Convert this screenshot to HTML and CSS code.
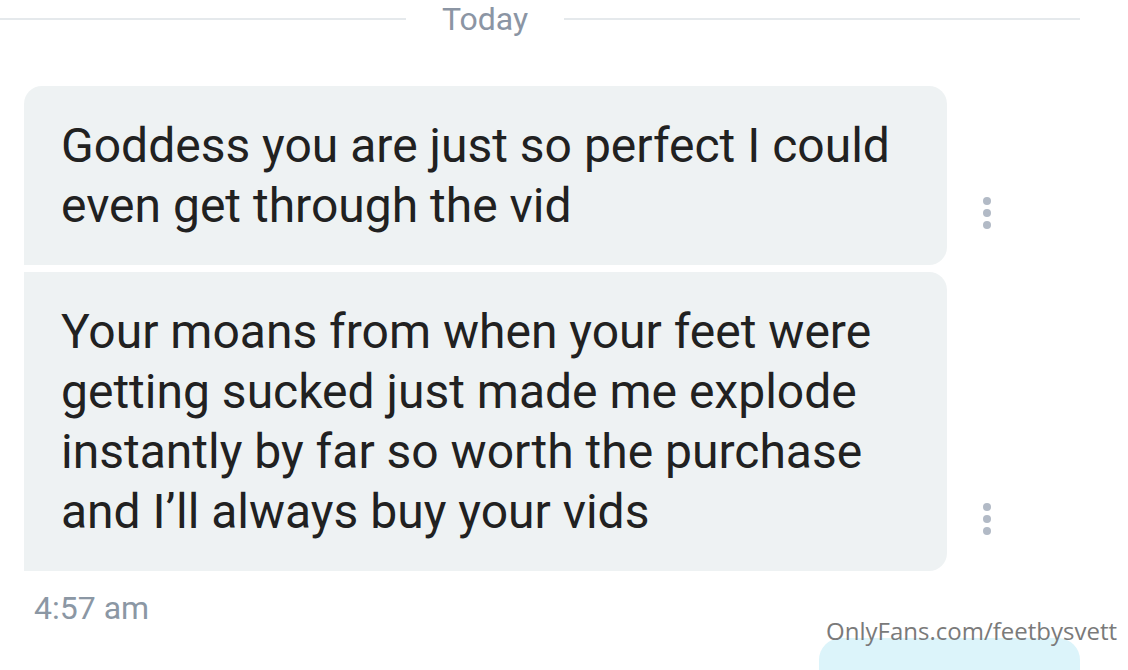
FILE: index.html
```html
<!DOCTYPE html>
<html lang="en">
<head>
  <meta charset="UTF-8">
  <title>Chat</title>
  <link rel="stylesheet" href="styles.css">
</head>
<body>

  <div class="day-divider">
    <span class="line line-left"></span>
    <span class="day-label">Today</span>
    <span class="line"></span>
  </div>

  <div class="thread">
    <div class="msg-row">
      <div class="bubble first">Goddess you are just so perfect I could even get through the vid</div>
      <div class="more"><span></span><span></span><span></span></div>
    </div>
    <div class="msg-row">
      <div class="bubble">Your moans from when your feet were getting sucked just made me explode instantly by far so worth the purchase and I’ll always buy your vids</div>
      <div class="more"><span></span><span></span><span></span></div>
    </div>
    <div class="msg-time">4:57 am</div>
  </div>

  <div class="bubble-out"></div>

  <div class="watermark">OnlyFans.com/feetbysvett</div>

</body>
</html>
```

FILE: styles.css
```css
body {
  margin: 0;
  font-family: Roboto, "Liberation Sans", sans-serif;
  background-color: #ffffff;
  overflow: hidden;
  height: 670px;
  position: relative;
}

/* 日付の区切り */
.day-divider {
  display: flex;
  align-items: center;
  height: 38px;
  padding-right: 48px;
}

.line {
  flex: 1;
  height: 2px;
  background-color: #e5e9ec;
}

.line-left {
  flex: none;
  width: 406px;
}

.day-label {
  margin: 0 36px;
  font-size: 32px;
  line-height: 38px;
  color: #8b95a4;
}

.thread {
  margin-top: 48px;
  padding-left: 24px;
}

.msg-row {
  display: flex;
  align-items: flex-end;
  margin-bottom: 7px;
}

.bubble {
  box-sizing: border-box;
  width: 923px;
  padding: 30px 37px 29px 37px;
  background-color: #eef2f3;
  border-radius: 0 18px 18px 0;
  font-size: 48px;
  line-height: 60px;
  color: #212121;
}

.bubble.first {
  border-top-left-radius: 18px;
}

/* メニューの点 */
.more {
  display: flex;
  flex-direction: column;
  gap: 4px;
  margin-left: 36px;
  margin-bottom: 36px;
}

.more span {
  width: 8px;
  height: 8px;
  border-radius: 50%;
  background-color: #b2bac6;
}

.msg-time {
  margin-top: 17px;
  padding-left: 10px;
  font-size: 32px;
  line-height: 40px;
  color: #8b97a4;
}

.bubble-out {
  width: 261px;
  height: 60px;
  margin: 10px 48px 0 auto;
  background-color: #dcf4fa;
  border-radius: 22px 22px 0 0;
}

.watermark {
  position: absolute;
  right: 11px;
  top: 614px;
  font-family: "Open Sans", sans-serif;
  font-size: 24px;
  line-height: 34px;
  color: #7a7a7a;
}
```
